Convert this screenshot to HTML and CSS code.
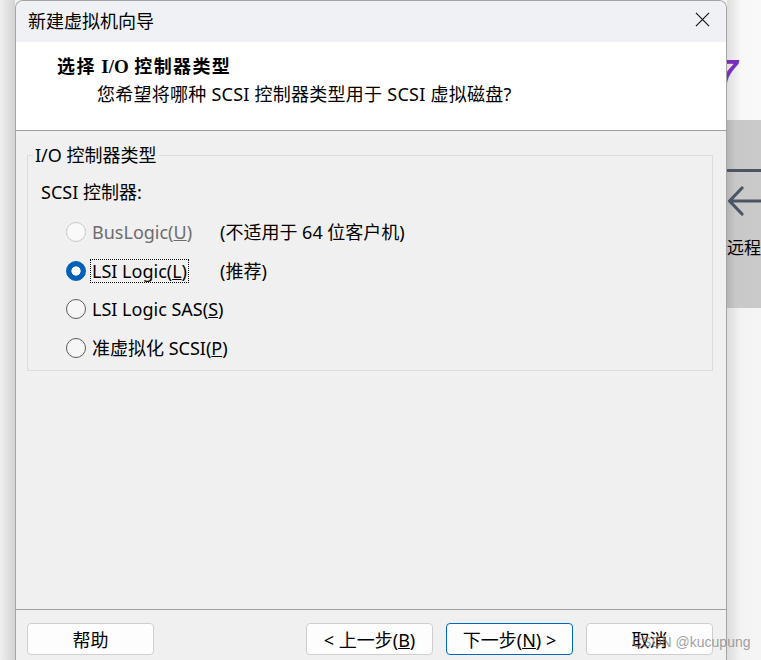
FILE: index.html
```html
<!DOCTYPE html>
<html lang="zh-CN">
<head>
<meta charset="utf-8">
<title>新建虚拟机向导</title>
<link rel="stylesheet" href="styles.css">
</head>
<body>
<div class="screen">
  <div class="left-edge"></div>
  <div class="dialog">
    <div class="titlebar">
      <span class="title">新建虚拟机向导</span>
      <svg class="close" viewBox="0 0 16 16"><path d="M1 1L15 15M15 1L1 15"/></svg>
    </div>
    <div class="header">
      <div class="h-title">选择 <span class="io">I/O</span> 控制器类型</div>
      <div class="h-sub">您希望将哪种 SCSI 控制器类型用于 SCSI 虚拟磁盘?</div>
    </div>
    <div class="body">
      <fieldset class="group">
        <legend>I/O 控制器类型</legend>
        <div class="label">SCSI 控制器:</div>
        <div class="options">
          <div class="opt disabled"><span class="radio"></span><span class="txt">BusLogic(<u>U</u>)</span></div>
          <div class="note">(不适用于 64 位客户机)</div>
          <div class="opt"><span class="radio checked"></span><span class="txt focus">LSI Logic(<u>L</u>)</span></div>
          <div class="note">(推荐)</div>
          <div class="opt wide"><span class="radio"></span><span class="txt">LSI Logic SAS(<u>S</u>)</span></div>
          <div class="opt wide"><span class="radio"></span><span class="txt">准虚拟化 SCSI(<u>P</u>)</span></div>
        </div>
      </fieldset>
    </div>
    <div class="footer">
      <button class="btn">帮助</button>
      <div class="spacer"></div>
      <button class="btn">&lt; 上一步(<u>B</u>)</button>
      <button class="btn primary">下一步(<u>N</u>) &gt;</button>
      <button class="btn">取消</button>
    </div>
  </div>
  <div class="right-edge">
    <div class="re-top"><span class="logo7">7</span></div>
    <div class="re-panel">
      <svg class="re-icon" viewBox="0 0 34 50"><path d="M0 2.5H34"/><path d="M15 20L2.5 33L15 46M2.5 33H34"/></svg>
      <div class="re-text">远程</div>
    </div>
    <div class="re-bottom"></div>
  </div>
</div>
<span class="watermark">CSDN @kucupung</span>
</body>
</html>
```
FILE: styles.css
```css
* { box-sizing: border-box; }
html, body { margin: 0; padding: 0; }
body {
  width: 761px;
  height: 660px;
  overflow: hidden;
  position: relative;
  font-family: "Noto Sans", "Noto Sans CJK SC", sans-serif;
  font-size: 18px;
  color: #000;
  background: #f4f4f4;
}
.screen { display: flex; height: 660px; }
.left-edge {
  width: 15px;
  flex: none;
  background: linear-gradient(to right, #efefef, #d3d3d3);
}
.dialog {
  width: 712px;
  flex: none;
  border: 1px solid #a4a4a4;
  border-bottom: none;
  border-radius: 8px 8px 0 0;
  background: #f0f0f0;
  overflow: hidden;
}
.titlebar {
  height: 41px;
  background: #eff1f5;
  display: flex;
  align-items: center;
  justify-content: space-between;
  padding: 0 16px 4px 12px;
}
.title { font-size: 18px; font-family: "Noto Sans CJK SC", sans-serif; }
.close { width: 15px; height: 15px; fill: none; stroke: #1a1a1a; stroke-width: 1.3; }
.header {
  height: 89px;
  background: #fff;
  border-bottom: 1px solid #a0a0a0;
  padding: 11px 0 0 41px;
}
.h-title { font-weight: bold; line-height: 24px; letter-spacing: 1.4px; font-family: "Noto Sans CJK SC", sans-serif; }
.h-title .io { font-family: "Liberation Serif", serif; font-size: 19px; letter-spacing: 0; }
.h-sub { line-height: 24px; margin-top: 3px; padding-left: 40px; letter-spacing: 0.25px; }
.body {
  height: 479px;
  border-bottom: 1px solid #a0a0a0;
  padding-top: 13px;
}
.group {
  margin: 0 13px 0 11px;
  border: 1px solid #dcdcdc;
  padding: 15px 0 11px 0;
  min-width: 0;
}
.group legend {
  line-height: 22px;
  padding: 0 2px;
  margin-left: 5px;
}
.label { line-height: 22px; margin-left: 13px; }
.options {
  display: grid;
  grid-template-columns: 154px auto;
  row-gap: 16.5px;
  margin: 18px 0 0 38px;
}
.opt { display: flex; align-items: center; height: 22px; white-space: nowrap; }
.opt.wide { grid-column: span 2; }
.note { line-height: 22px; white-space: nowrap; }
.radio {
  width: 20px;
  height: 20px;
  flex: none;
  border-radius: 50%;
  border: 1px solid #5c5c5c;
  background: #f6f6f6;
  margin-right: 4px;
}
.radio.checked {
  border-color: #005fb8;
  background: radial-gradient(circle, #fff 0 4.3px, #005fb8 4.9px);
}
.txt { line-height: 22px; border: 1px dotted transparent; padding: 0 1px; }
.txt.focus { border-color: #000; }
.disabled .radio { border-color: #c8c8c8; background: #f9f9f9; }
.disabled .txt { color: #6d6d6d; }
.footer {
  display: flex;
  gap: 13px;
  padding: 13px 13px 0 11px;
}
.spacer { flex: 1; }
.btn {
  width: 127px;
  height: 32px;
  border: 1px solid #cfcfcf;
  border-radius: 4px;
  background: #fdfdfd;
  font: inherit;
  color: #000;
  padding: 0;
}
.btn.primary { border-color: #0067c0; }
.right-edge {
  width: 34px;
  flex: none;
  display: flex;
  flex-direction: column;
  overflow: hidden;
}
.re-top {
  height: 120px;
  background: linear-gradient(to right, #dedede, #f7f7f7 40%, #f9f9f9);
  padding-top: 54px;
  overflow: hidden;
}
.logo7 {
  display: block;
  margin-left: -8px;
  font-family: "Liberation Sans", sans-serif;
  font-weight: bold;
  font-style: italic;
  font-size: 34px;
  line-height: 34px;
  color: #7a2dbd;
}
.re-panel {
  height: 188px;
  background: linear-gradient(to right, #b4b4b4, #c8c8c8 25%, #cacaca);
  padding-top: 48px;
}
.re-icon { display: block; width: 34px; height: 50px; fill: none; stroke: #4a5663; stroke-width: 3.2; stroke-linecap: round; stroke-linejoin: round; }
.re-text { margin-top: 18px; line-height: 22px; font-size: 17px; white-space: nowrap; font-family: "Noto Sans CJK SC", sans-serif; }
.re-bottom {
  flex: 1;
  background: linear-gradient(to right, #dcdcdc, #f3f3f3 40%, #f5f5f5);
}
.watermark {
  position: absolute;
  left: 632px;
  top: 633px;
  font-family: "Liberation Sans", sans-serif;
  font-size: 14px;
  line-height: 18px;
  color: rgba(128, 128, 128, 0.75);
}
```
